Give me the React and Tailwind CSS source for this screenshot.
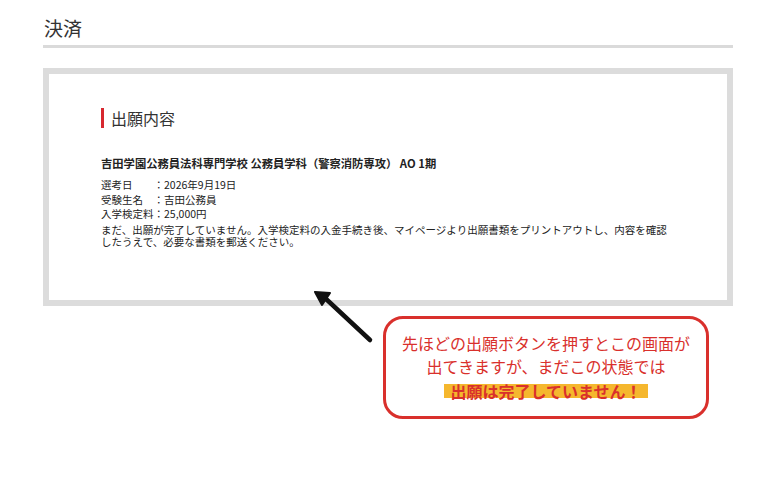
import React from 'react';

const jp = { fontFamily: '"Noto Sans CJK JP", "Noto Sans", sans-serif' };

function Row({ label, value }) {
    return (
        <div className="flex leading-[14.5px]">
            <span className="inline-block w-[52.5px]">{label}</span>
            <span>：{value}</span>
        </div>
    );
}

function Arrow() {
    return (
        <svg className="absolute left-[305px] top-[282px]" width="80" height="70" viewBox="0 0 80 70">
            <line x1="65" y1="58" x2="20" y2="16" stroke="#111" strokeWidth="4.5" strokeLinecap="round" />
            <polygon points="10,10 25,11 17,23" fill="#111" stroke="#111" strokeWidth="2" strokeLinejoin="round" />
        </svg>
    );
}

export default function App() {
    return (
        <div className="relative w-[770px] h-[500px] bg-white text-[#333]" style={jp}>
            <div className="ml-[43px] w-[690px] flex flex-col">
                <h1 className="pt-[14px] pl-[1px] text-[19px] leading-[28px] font-normal">決済</h1>
                <div className="mt-[3px] h-[3px] bg-[#dadada]" />

                <div className="mt-[20px] h-[238px] border-[6px] border-[#dcdcdc] pl-[52px] pt-[32px]">
                    <div className="flex items-center h-[24px]">
                        <span className="w-[3px] h-[20px] bg-[#d7282f]" />
                        <span className="ml-[7px] text-[16px] leading-[24px]">出願内容</span>
                    </div>

                    <p className="mt-[25px] text-[11.3px] leading-[16px] font-bold text-[#222]">
                        吉田学園公務員法科専門学校 公務員学科（警察消防専攻） AO 1期
                    </p>

                    <div className="mt-[7px] text-[10.5px] text-[#222]">
                        <Row label="選考日" value="2026年9月19日" />
                        <Row label="受験生名" value="吉田公務員" />
                        <Row label="入学検定料" value="25,000円" />
                        <p className="mt-[2.5px] leading-[11.5px]">
                            まだ、出願が完了していません。入学検定料の入金手続き後、マイページより出願書類をプリントアウトし、内容を確認
                            <br />
                            したうえで、必要な書類を郵送ください。
                        </p>
                    </div>
                </div>

                <div className="ml-[340px] mt-[10px] w-[326px] h-[103px] border-[3px] border-[#d9302c] rounded-[20px] flex flex-col items-center justify-center text-[16px] leading-[23.5px] text-[#d9302c]">
                    <p>先ほどの出願ボタンを押すとこの画面が</p>
                    <p>出てきますが、まだこの状態では</p>
                    <p className="mt-[1px]">
                        <span className="inline-block px-[6px] leading-[14px] bg-[#f5b72e] font-bold">出願は完了していません！</span>
                    </p>
                </div>
            </div>
            <Arrow />
        </div>
    );
}
